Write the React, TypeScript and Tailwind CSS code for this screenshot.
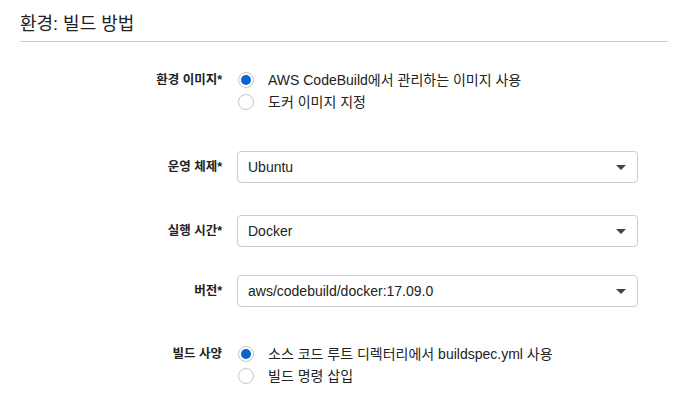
const font = { fontFamily: '"Liberation Sans", "Noto Sans CJK KR", sans-serif' };

function Radio({ checked, label }: { checked?: boolean; label: string }) {
  return (
    <div className="flex h-[22px] items-center">
      <span className="flex h-4 w-4 items-center justify-center rounded-full border border-[#c6c6c6] bg-white">
        {checked && <span className="h-[10px] w-[10px] rounded-full bg-[#0b63ce]" />}
      </span>
      <span className="ml-[14px] text-[14px] text-[#222]">{label}</span>
    </div>
  );
}

function Select({ value }: { value: string }) {
  return (
    <div className="flex h-8 w-[401px] items-center justify-between rounded-[4px] border border-[#ccc] bg-white pl-[10px] pr-[11px]">
      <span className="text-[14px] text-[#222]">{value}</span>
      <svg width="10" height="5" viewBox="0 0 10 5">
        <path d="M0 0h10L5 5z" fill="#444" />
      </svg>
    </div>
  );
}

function Label({ children, top }: { children: string; top?: boolean }) {
  return (
    <div
      className={
        "w-[202px] shrink-0 text-right text-[12.5px] font-bold text-[#222] " +
        (top ? "leading-[22px]" : "")
      }
    >
      {children}
    </div>
  );
}

export default function App() {
  return (
    <div className="h-[410px] w-[688px] bg-white px-5" style={font}>
      <h2 className="border-b border-[#ccc] pb-[5px] pt-[12px] text-[18px] leading-6 text-[#222]">
        환경: 빌드 방법
      </h2>

      <div className="mt-[27px] flex items-start gap-[16px]">
        <Label top>환경 이미지*</Label>
        <div className="flex flex-col">
          <Radio checked label="AWS CodeBuild에서 관리하는 이미지 사용" />
          <Radio label="도커 이미지 지정" />
        </div>
      </div>

      <div className="mt-[38px] flex items-center gap-[15px]">
        <Label>운영 체제*</Label>
        <Select value="Ubuntu" />
      </div>

      <div className="mt-[32px] flex items-center gap-[15px]">
        <Label>실행 시간*</Label>
        <Select value="Docker" />
      </div>

      <div className="mt-[28px] flex items-center gap-[15px]">
        <Label>버전*</Label>
        <Select value="aws/codebuild/docker:17.09.0" />
      </div>

      <div className="mt-[36px] flex items-start gap-[16px]">
        <Label top>빌드 사양</Label>
        <div className="flex flex-col">
          <Radio checked label="소스 코드 루트 디렉터리에서 buildspec.yml 사용" />
          <Radio label="빌드 명령 삽입" />
        </div>
      </div>
    </div>
  );
}
